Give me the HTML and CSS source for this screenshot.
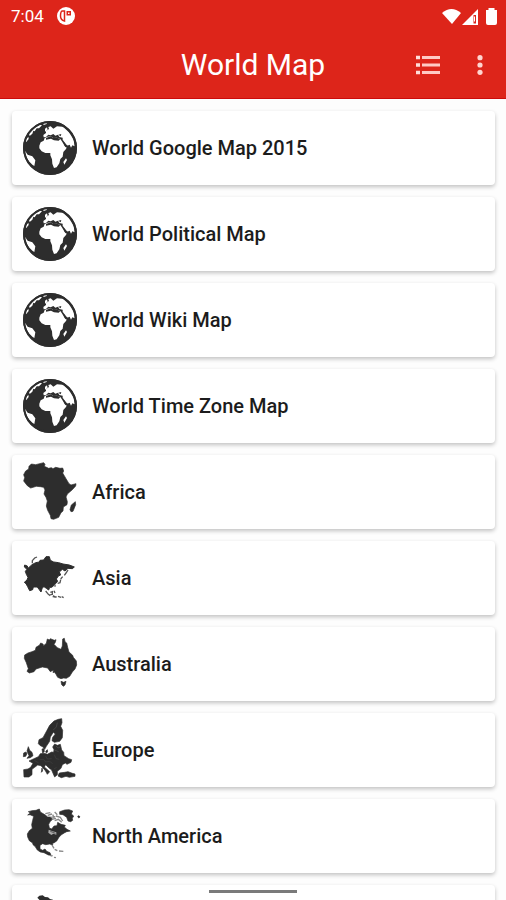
FILE: index.html
```html
<!DOCTYPE html>
<html lang="en">
<head>
<meta charset="utf-8">
<meta name="viewport" content="width=device-width, initial-scale=1">
<title>World Map</title>
<link rel="stylesheet" href="styles.css">
</head>
<body>
<svg class="defs" aria-hidden="true">
  <symbol id="globe" viewBox="30 39 180 180">
    <circle cx="120" cy="129" r="81" fill="#2d2d2d"/>
    <g fill="#fff">
      <path d="M88 122L92 112L101 107L104 99L113 95L122 94L130 99L141 98L151 102L157 111L164 123L172 124L168 132L160 141L158 155L151 162L148 175L140 187L132 189L127 176L126 163L121 151L121 144L106 144L95 139L88 130Z"/>
      <path d="M100 90L108 84L108 78L117 72L115 66L122 64L130 71L141 64L157 65C171 73 184 88 191 106L194 124L187 121L183 128L179 119L172 122L163 111L158 105L158 98L148 96L144 89L136 92L130 87L122 91L115 89L108 96L101 97Z"/>
      <path d="M66 77L74 68L90 59L96 61L87 70L80 70L74 79L70 77L67 86L59 93L57 86ZM99 55L112 52L110 57L101 60ZM105 71L111 67L113 75L105 80ZM47 104L55 95L56 102L48 112ZM45 137L53 149L67 154L76 166L73 183C57 172 47 157 45 137ZM160 171L168 160L171 165L163 179Z"/>
    </g>
    <path d="M108 99L122 94L130 99L141 98L151 102L146 107L132 106L123 101L108 104ZM145 89L154 87L152 94ZM159 105L166 119L175 123L171 128L165 125Z" fill="#2d2d2d"/>
    <circle cx="120" cy="129" r="78" fill="none" stroke="#2d2d2d" stroke-width="6"/>
  </symbol>
  <symbol id="africa" viewBox="30 36 180 180">
    <path d="M57 49L64 42L77 44L101 38L105 43L103 49L116 55L124 53L129 56L137 52L150 55L158 54L161 63L158 69L168 86L177 101L183 105L198 101L197 108L187 119L172 132L168 141L172 155L171 164L160 171L159 183L153 188L146 202L131 208L123 206L121 196L113 181L109 168L112 153L108 142L102 132L105 120L101 112L91 110L79 109L62 114L52 107L41 93L44 83L41 74L47 63L56 57ZM196 155L197 164L189 184L183 185L180 179L184 165Z" stroke="#2d2d2d" stroke-width="2"/>
  </symbol>
  <symbol id="asia" viewBox="30 30 180 180">
    <path d="M44 81L52 84L54 91L66 80L77 74L88 72L90 67L101 66L108 56L118 56L121 67L131 72L146 74L159 78L178 81L193 87L187 92L174 91L165 99L157 94L148 102L152 111L145 114L139 123L143 130L132 142L125 148L119 148L116 156L109 151L102 146L97 149L93 162L87 154L82 147L70 147L68 155L59 158L53 146L48 137L43 133L51 126L54 118L49 109L46 100L51 94L43 87Z" stroke="#2d2d2d" stroke-width="3"/>
    <path d="M67 76L67 68L74 60L81 57M174 96L168 105L163 112M158 116L152 123M152 125L150 134L143 136M135 140L135 146M107 159L115 169L121 173M121 163L127 161L127 169L121 170M132 158L135 165M130 172L135 178M128 176L140 177M144 175L153 178M155 176L161 179" fill="none" stroke="#555" stroke-width="4"/>
  </symbol>
  <symbol id="australia" viewBox="30 35 180 180">
    <path d="M44 98L54 92L66 88L76 84L78 75L89 68L92 62L99 65L101 70L109 63L112 50L118 53L121 49L133 54L138 52L136 60L132 66L142 76L153 81L157 71L158 50L163 48L165 58L170 62L173 75L177 89L188 99L190 105L199 116L200 128L195 140L187 149L179 162L169 168L161 167L153 169L143 165L138 156L133 149L129 151L130 143L121 148L113 137L97 134L78 140L72 148L58 152L51 147L55 139L49 121L43 108ZM153 177L161 180L168 177L165 188L160 192L155 187Z" stroke="#2d2d2d" stroke-width="2"/>
  </symbol>
  <symbol id="europe" viewBox="30 35 180 180">
    <path d="M155 31L156 43L152 54L158 66L157 88L149 99L133 102L126 97L128 87L136 77L130 72L121 86L119 99L109 114L104 123L98 115L91 112L85 106L87 94L99 88L111 66L119 51L132 38L145 33ZM96 122L102 121L103 130L98 134ZM107 129L112 124L113 131L109 134ZM55 115L59 126L66 132L69 142L61 148L51 150L57 142L51 128ZM41 134L48 131L51 136L47 144L40 145ZM128 116L134 107L142 111L151 108L155 125L161 132L162 142L176 151L185 154L183 162L171 168L166 164L157 169L153 180L142 189L142 199L134 206L129 195L125 185L116 178L107 169L103 176L119 190L112 198L106 187L93 172L83 170L74 177L66 183L66 199L57 206L42 206L41 184L54 182L62 177L69 165L57 158L72 151L85 145L91 136L103 135L112 138L125 131L131 132L132 124ZM96 179L98 188L94 192ZM144 203L148 194L164 192L174 190L187 195L195 197L195 204L178 207L168 204L154 208Z" stroke="#2d2d2d" stroke-width="2"/>
    <path d="M89 154L101 153L107 161L119 159L128 166M107 143L112 152L125 151M133 139L138 151L148 153M132 182L140 177M73 156L86 164" fill="none" stroke="#555" stroke-width="1"/>
    <path d="M138 113L144 119L151 116M133 125L146 130M142 43L139 56L130 65" fill="none" stroke="#777" stroke-width="1"/>
  </symbol>
  <symbol id="north-america" viewBox="30 33 180 180">
    <path d="M55 50L66 47L78 46L88 42L91 51L106 60L113 66L122 66L128 73L121 79L116 88L118 99L125 102L132 93L141 92L143 82L153 88L166 91L163 96L171 103L181 108L170 110L164 113L153 120L146 128L141 137L133 143L128 145L128 150L119 147L107 149L98 146L90 151L90 162L98 166L105 162L110 169L120 173L123 181L115 180L102 173L91 171L82 165L75 154L69 149L68 144L58 137L53 126L52 117L58 107L67 100L65 89L68 76L71 64L60 59L53 60L61 54ZM149 50L164 45L177 44L188 48L184 57L191 63L187 70L188 76L182 80L174 78L170 67L159 59L149 58ZM203 64L207 62L210 66L206 69Z" stroke="#2d2d2d" stroke-width="2"/>
    <path d="M106 56L121 53M113 61L126 57M122 67L136 65M128 59L133 69M134 51L142 59M125 73L138 70M134 77L145 73L155 82M138 63L151 67L158 78M126 150L132 160M134 163L142 167M147 168L160 169M122 183L128 182M132 187L138 188" fill="none" stroke="#888" stroke-width="4"/>
    <path d="M116 104L128 109L139 112L139 119L130 116L124 120L115 113Z" fill="#aaa"/>
    <path d="M121 109L136 115" stroke="#333" stroke-width="2"/>
  </symbol>
  <symbol id="south-america" viewBox="30 291 180 180">
    <path d="M82 308L88 302L98 301L105 306L114 307L120 312L129 314L134 325L151 333L171 341L169 354L160 366L157 382L143 390L134 405L124 416L119 429L121 447L111 440L107 418L110 389L100 370L83 352L79 337L87 323L88 314Z"/>
  </symbol>
</svg>

<div class="screen">
  <header class="header">
    <div class="status">
      <span class="clock">7:04</span>
      <svg class="notice" viewBox="0 0 18 18" aria-hidden="true"><circle cx="9" cy="9" r="9" fill="#fff"/><path d="M7.500 4H5.500Q3.500 4 3.500 9Q3.500 13 7.500 14Z" fill="none" stroke="#dd251a" stroke-width="1.500"/><path d="M9.500 4H14V8.500H9.500Z" fill="#dd251a"/><path d="M11 5.500H12.500V7H11Z" fill="#fff"/></svg>
      <svg class="signals" viewBox="0 0 56 20" aria-hidden="true">
        <path d="M0 5Q9.500-3 19 5L10 16Z" fill="#fff"/>
        <path d="M20 17L36 1V17Z" fill="#fff"/><path d="M31.500 7V15.500H34V7Z" fill="#dd251a"/><path d="M32.500 8.500V13.500" stroke="#fff"/>
        <path d="M46.500 0H52.500V2H55V15Q55 17 53 17H46Q44 17 44 15V2H46.500Z" fill="#fff"/>
      </svg>
    </div>
    <div class="toolbar">
      <h1 class="title">World Map</h1>
      <div class="actions">
        <button class="action" type="button" aria-label="List"><svg class="list-icon" viewBox="0 0 24 20"><path d="M0 2.500H4M0 10H4M0 17.500H4" stroke="#ffdeda" stroke-width="3.500"/><path d="M6 2.500H24M6 10H24M6 17.500H24" stroke="#ffc9c4" stroke-width="3"/></svg></button>
        <button class="action" type="button" aria-label="More options"><svg class="more-icon" viewBox="0 0 6 20"><g fill="#ffd5d0"><circle cx="3" cy="2.700" r="2.600"/><circle cx="3" cy="10" r="2.600"/><circle cx="3" cy="17.300" r="2.600"/></g></svg></button>
      </div>
    </div>
  </header>
  <main class="list">
    <a class="card" href="#"><svg class="icon"><use href="#globe"/></svg><span>World Google Map 2015</span></a>
    <a class="card" href="#"><svg class="icon"><use href="#globe"/></svg><span>World Political Map</span></a>
    <a class="card" href="#"><svg class="icon"><use href="#globe"/></svg><span>World Wiki Map</span></a>
    <a class="card" href="#"><svg class="icon"><use href="#globe"/></svg><span>World Time Zone Map</span></a>
    <a class="card" href="#"><svg class="icon"><use href="#africa"/></svg><span>Africa</span></a>
    <a class="card" href="#"><svg class="icon"><use href="#asia"/></svg><span>Asia</span></a>
    <a class="card" href="#"><svg class="icon"><use href="#australia"/></svg><span>Australia</span></a>
    <a class="card" href="#"><svg class="icon"><use href="#europe"/></svg><span>Europe</span></a>
    <a class="card" href="#"><svg class="icon"><use href="#north-america"/></svg><span>North America</span></a>
    <a class="card" href="#"><svg class="icon"><use href="#south-america"/></svg></a>
  </main>
  <div class="home-bar"></div>
</div>
</body>
</html>
```
FILE: styles.css
```css
* { box-sizing: border-box; }

body {
  margin: 0;
  font-family: Roboto, "Liberation Sans", sans-serif;
  color: #1c1c1c;
  background: #fdfdfd;
}

.defs {
  position: absolute;
  width: 0;
  height: 0;
}

symbol { overflow: visible; }

.screen {
  position: relative;
  display: flex;
  flex-direction: column;
  height: 100vh;
  overflow: hidden;
}

.header {
  flex: none;
  color: #fff;
  background: #dd251a;
  border-bottom: 1px solid #cc0b0b;
}

.status {
  display: flex;
  align-items: center;
  height: 32px;
  padding: 0 8px 0 11px;
}

.clock {
  font-size: 17px;
  line-height: 20px;
}

.notice {
  width: 18px;
  height: 18px;
  margin-left: 13px;
}

.signals {
  width: 56px;
  height: 20px;
  margin-left: auto;
  margin-top: 4px;
}

.toolbar {
  display: grid;
  grid-template-columns: 1fr auto 1fr;
  align-items: center;
  height: 66px;
}

.title {
  grid-column: 2;
  margin: 0;
  font-size: 30px;
  font-weight: 400;
  line-height: 36px;
}

.actions {
  display: flex;
  justify-content: flex-end;
  gap: 4px;
  padding-right: 2px;
}

.action {
  display: grid;
  place-items: center;
  width: 48px;
  height: 48px;
  padding: 0;
  border: 0;
  background: none;
}

.list-icon {
  width: 24px;
  height: 20px;
}

.more-icon {
  width: 6px;
  height: 20px;
}

.list {
  display: flex;
  flex-direction: column;
  gap: 12px;
  min-height: 0;
  padding: 12px 11px 12px 12px;
  overflow: hidden;
}

.card {
  display: flex;
  flex: none;
  align-items: center;
  gap: 12px;
  height: 74px;
  padding: 0 8px;
  font-size: 20px;
  font-weight: 500;
  line-height: 24px;
  color: inherit;
  text-decoration: none;
  background: #fff;
  border-radius: 4px;
  box-shadow: 0 2px 4px rgba(0, 0, 0, 0.24);
}

.icon {
  flex: none;
  width: 60px;
  height: 60px;
  overflow: visible;
  fill: #2d2d2d;
}

.home-bar {
  position: absolute;
  bottom: 7px;
  left: 50%;
  width: 88px;
  height: 3px;
  background: #7a7a7a;
  transform: translateX(-50%);
}
```
